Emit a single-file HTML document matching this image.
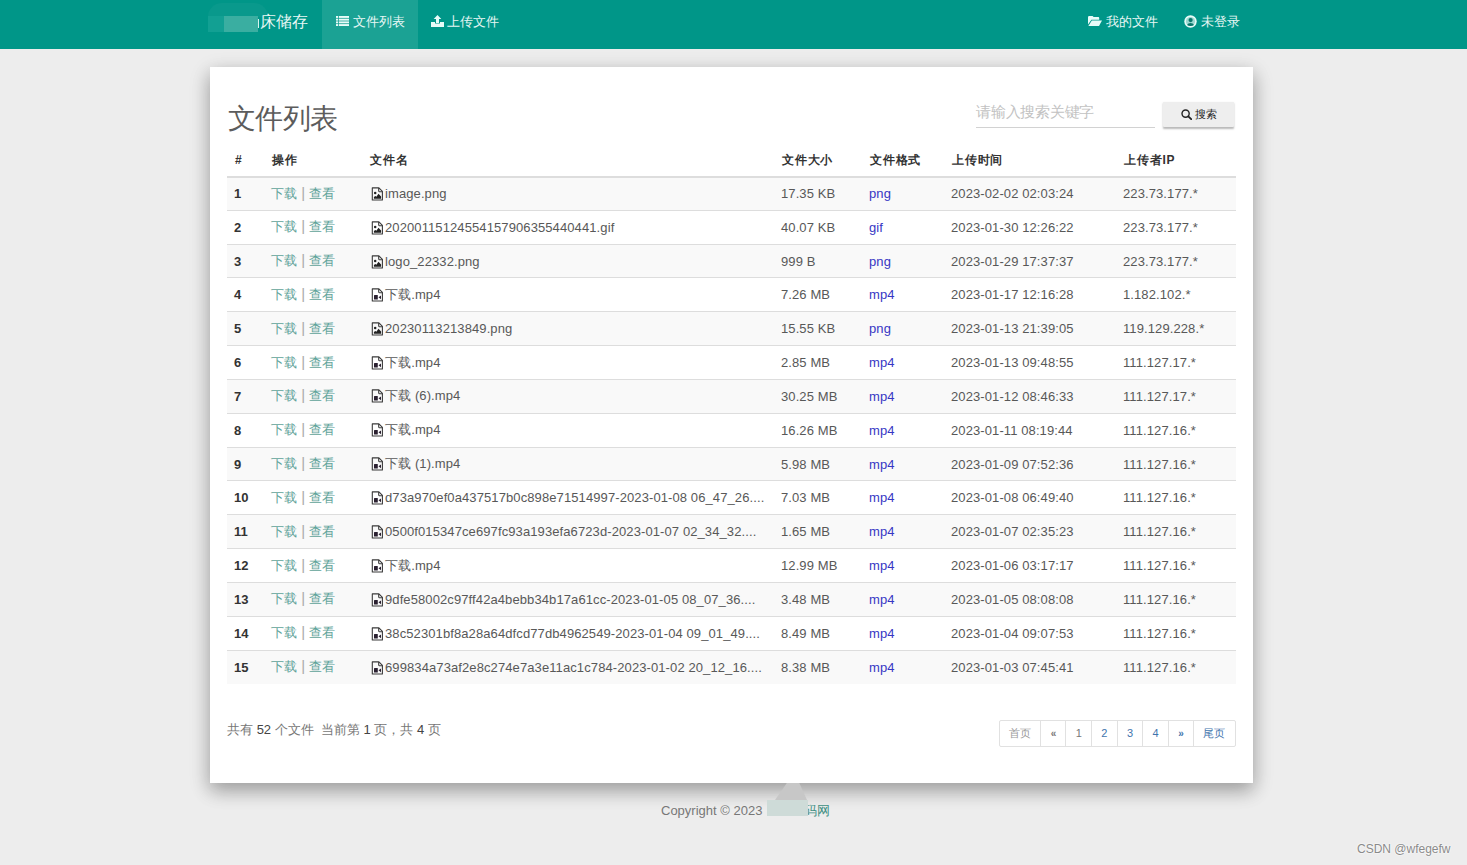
<!DOCTYPE html>
<html><head><meta charset="utf-8"><title>文件列表</title>
<style>
*{box-sizing:border-box;margin:0;padding:0}
html,body{width:1467px;height:865px;overflow:hidden}
body{background:#ededed;font-family:"Liberation Sans",sans-serif;font-size:13px;color:#333;position:relative}
.abs{position:absolute}
.nav{position:absolute;left:0;top:0;width:1467px;height:48.5px;background:#009688;color:#e6f7f4}
.nav .t{position:absolute;top:1px;height:48px;line-height:42px;font-size:13px;white-space:nowrap}
.active{position:absolute;left:322px;top:0;width:96px;height:48.5px;background:#1ba294}
.brand{font-size:16px !important;top:0.5px !important}
.panel{position:absolute;left:210px;top:67px;width:1043px;height:716px;background:#fff;box-shadow:0 8px 17px rgba(0,0,0,.2),0 6px 20px rgba(0,0,0,.19)}
h2{position:absolute;left:228px;top:99px;font-size:28px;letter-spacing:-.6px;font-weight:300;color:#5c5c5c;line-height:40px;white-space:nowrap}
.search{position:absolute;left:976px;top:100px;width:179px;height:27.7px;border-bottom:1px solid #d2d2d2;color:#c2c2c2;font-size:15px;letter-spacing:-.25px;line-height:24px;white-space:nowrap}
.btn{position:absolute;left:1163px;top:101.5px;width:71px;height:25px;background:#eee;border-radius:1px;box-shadow:0 1.5px 2px rgba(0,0,0,.28);font-size:11px;font-weight:normal;color:#222;line-height:24px;white-space:nowrap}
table{position:absolute;left:227px;top:140.5px;width:1009px;border-collapse:collapse;table-layout:fixed}
th{text-align:left;font-weight:bold;color:#333;height:36px;padding:4px 0 0 8px;font-size:12px;letter-spacing:.8px;border-bottom:2px solid #ddd;vertical-align:middle;white-space:nowrap}
td{height:33.83px;padding:0 0 0 7px;border-top:1px solid #ddd;vertical-align:middle;white-space:nowrap;overflow:hidden;color:#585858;letter-spacing:.1px}
tbody tr:nth-child(odd) td{background:#f9f9f9}
tbody tr:first-child td{border-top:0}
td.n{font-weight:bold;color:#333}
a{text-decoration:none}
.op a{color:#5fa399}
.op span{color:#aaa;margin:0 4px;font-size:15px;line-height:13px;vertical-align:0}
.fmt{color:#3737c4}
.fi{display:inline-block;width:12px;height:14px;vertical-align:-3px;margin:0 2px 0 2px}
.summary{position:absolute;left:227px;top:721px;color:#777;font-size:13px;white-space:nowrap;line-height:17px}
.summary b{font-weight:normal;color:#444}
.pg{position:absolute;left:999px;top:720px;height:26.5px;display:flex;border:1px solid #e1e1e1;border-radius:2px;font-size:11px;background:#fff}
.pg div{height:100%;border-left:1px solid #e1e1e1;text-align:center;line-height:24.5px;color:#3f74ad}
.pg div:first-child{border-left:0}
.copy{position:absolute;left:661px;top:802.8px;color:#777;font-size:13px;white-space:nowrap;line-height:16px}
.csdn{position:absolute;left:1357px;top:842.3px;color:#8a8a8a;text-shadow:0 0 2px #fff,0 0 2px #fff;font-size:12px;white-space:nowrap;line-height:14px}
</style></head>
<body>
<div class="nav">
  <div class="active"></div>
  <div class="abs" style="left:208px;top:3px;width:60px;height:14px;border-radius:30px 30px 0 0;background:rgba(255,255,255,.035)"></div>
  <div class="t brand" style="left:260px">床储存</div>
  <div class="abs" style="left:250px;top:26.5px;width:9px;height:1.2px;background:#d8f3ef"></div>
  <div class="abs" style="left:257.5px;top:19px;width:1.2px;height:8.7px;background:#d8f3ef"></div>
  <div class="abs" style="left:208px;top:16px;width:16px;height:16px;background:#12a093"></div>
  <div class="abs" style="left:224px;top:16px;width:34px;height:16px;background:#3aaea1"></div>
  <svg class="abs" style="left:336px;top:16px" width="13" height="10" viewBox="0 0 13 10"><g fill="#e8fbf8"><rect x="0" y="0" width="2.2" height="1.9"/><rect x="3" y="0" width="10" height="1.9"/><rect x="0" y="2.7" width="2.2" height="1.9"/><rect x="3" y="2.7" width="10" height="1.9"/><rect x="0" y="5.4" width="2.2" height="1.9"/><rect x="3" y="5.4" width="10" height="1.9"/><rect x="0" y="8.1" width="2.2" height="1.9"/><rect x="3" y="8.1" width="10" height="1.9"/></g></svg>
  <div class="t" style="left:353px">文件列表</div>
  <svg class="abs" style="left:431px;top:15px" width="13" height="12" viewBox="0 0 13 12"><g fill="#e8fbf8"><path d="M6.5 0L10.3 4H8V8H5V4H2.7z"/><path d="M0 7H4V8.6H9V7H13V12H0z"/></g></svg>
  <div class="t" style="left:447px">上传文件</div>
  <svg class="abs" style="left:1088px;top:16px" width="14" height="10" viewBox="0 0 14 10"><g fill="#e8fbf8"><path d="M0 1.2Q0 0 1.2 0H4.6L5.6 1.1H10.4Q11.2 1.1 11.2 2V3.8H3.4L0 8.6z"/><path d="M3.8 4.6H14L11 10H0.4z"/></g></svg>
  <div class="t" style="left:1106px">我的文件</div>
  <svg class="abs" style="left:1184px;top:15px" width="13" height="13" viewBox="0 0 13 13"><circle cx="6.5" cy="6.5" r="6.2" fill="#e8fbf8"/><circle cx="6.5" cy="6.5" r="4.6" fill="#9bd8d0"/><circle cx="6.6" cy="5.1" r="2.1" fill="#08766b"/><path d="M3 10Q4 7.9 6.5 7.9Q9 7.9 10 10Q8.5 11 6.5 11Q4.5 11 3 10Z" fill="#08766b"/></svg>
  <div class="t" style="left:1201px">未登录</div>
</div>
<div class="panel"></div>
<h2>文件列表</h2>
<div class="search">请输入搜索关键字</div>
<div class="btn"><svg class="abs" style="left:18px;top:7px" width="11" height="11" viewBox="0 0 11 11"><circle cx="4.6" cy="4.6" r="3.6" fill="none" stroke="#222" stroke-width="1.4"/><path d="M7.3 7.3L10.2 10.2" stroke="#222" stroke-width="1.8" stroke-linecap="round"/></svg><span class="abs" style="left:31.5px;top:0">搜索</span></div>
<table>
<colgroup><col style="width:37px"><col style="width:98px"><col style="width:412px"><col style="width:88px"><col style="width:82px"><col style="width:172px"><col style="width:120px"></colgroup>
<thead><tr><th>#</th><th>操作</th><th>文件名</th><th>文件大小</th><th>文件格式</th><th>上传时间</th><th>上传者IP</th></tr></thead>
<tbody id="tb">
<tr><td class="n">1</td><td class="op"><a>下载</a><span>|</span><a>查看</a></td><td><svg class="fi" viewBox="0 0 12 14"><path d="M1.3 .9H7.9L11.4 4.4V13H1.3Z" fill="none" stroke="#3a3a3a" stroke-width="1.1" stroke-linejoin="round"/><path d="M7.7 .9V4.1Q7.7 4.7 8.3 4.7H11.4" fill="none" stroke="#3a3a3a" stroke-width="1.1"/><circle cx="4.2" cy="6" r="1.25" fill="#222"/><path d="M2.9 11.8V10L4.4 8.9L5.4 9.7L7.5 6.8L10.1 9.5V11.8Z" fill="#222"/></svg>image.png</td><td>17.35 KB</td><td class="fmt">png</td><td>2023-02-02 02:03:24</td><td>223.73.177.*</td></tr>
<tr><td class="n">2</td><td class="op"><a>下载</a><span>|</span><a>查看</a></td><td><svg class="fi" viewBox="0 0 12 14"><path d="M1.3 .9H7.9L11.4 4.4V13H1.3Z" fill="none" stroke="#3a3a3a" stroke-width="1.1" stroke-linejoin="round"/><path d="M7.7 .9V4.1Q7.7 4.7 8.3 4.7H11.4" fill="none" stroke="#3a3a3a" stroke-width="1.1"/><circle cx="4.2" cy="6" r="1.25" fill="#222"/><path d="M2.9 11.8V10L4.4 8.9L5.4 9.7L7.5 6.8L10.1 9.5V11.8Z" fill="#222"/></svg>20200115124554157906355440441.gif</td><td>40.07 KB</td><td class="fmt">gif</td><td>2023-01-30 12:26:22</td><td>223.73.177.*</td></tr>
<tr><td class="n">3</td><td class="op"><a>下载</a><span>|</span><a>查看</a></td><td><svg class="fi" viewBox="0 0 12 14"><path d="M1.3 .9H7.9L11.4 4.4V13H1.3Z" fill="none" stroke="#3a3a3a" stroke-width="1.1" stroke-linejoin="round"/><path d="M7.7 .9V4.1Q7.7 4.7 8.3 4.7H11.4" fill="none" stroke="#3a3a3a" stroke-width="1.1"/><circle cx="4.2" cy="6" r="1.25" fill="#222"/><path d="M2.9 11.8V10L4.4 8.9L5.4 9.7L7.5 6.8L10.1 9.5V11.8Z" fill="#222"/></svg>logo_22332.png</td><td>999 B</td><td class="fmt">png</td><td>2023-01-29 17:37:37</td><td>223.73.177.*</td></tr>
<tr><td class="n">4</td><td class="op"><a>下载</a><span>|</span><a>查看</a></td><td><svg class="fi" viewBox="0 0 12 14"><path d="M1.3 .9H7.9L11.4 4.4V13H1.3Z" fill="none" stroke="#3a3a3a" stroke-width="1.1" stroke-linejoin="round"/><path d="M7.7 .9V4.1Q7.7 4.7 8.3 4.7H11.4" fill="none" stroke="#3a3a3a" stroke-width="1.1"/><rect x="3" y="7.1" width="3.8" height="4.3" rx=".5" fill="#2a2030"/><path d="M7.5 9.3L10 7.4V11.2Z" fill="#2a2030"/></svg>下载.mp4</td><td>7.26 MB</td><td class="fmt">mp4</td><td>2023-01-17 12:16:28</td><td>1.182.102.*</td></tr>
<tr><td class="n">5</td><td class="op"><a>下载</a><span>|</span><a>查看</a></td><td><svg class="fi" viewBox="0 0 12 14"><path d="M1.3 .9H7.9L11.4 4.4V13H1.3Z" fill="none" stroke="#3a3a3a" stroke-width="1.1" stroke-linejoin="round"/><path d="M7.7 .9V4.1Q7.7 4.7 8.3 4.7H11.4" fill="none" stroke="#3a3a3a" stroke-width="1.1"/><circle cx="4.2" cy="6" r="1.25" fill="#222"/><path d="M2.9 11.8V10L4.4 8.9L5.4 9.7L7.5 6.8L10.1 9.5V11.8Z" fill="#222"/></svg>20230113213849.png</td><td>15.55 KB</td><td class="fmt">png</td><td>2023-01-13 21:39:05</td><td>119.129.228.*</td></tr>
<tr><td class="n">6</td><td class="op"><a>下载</a><span>|</span><a>查看</a></td><td><svg class="fi" viewBox="0 0 12 14"><path d="M1.3 .9H7.9L11.4 4.4V13H1.3Z" fill="none" stroke="#3a3a3a" stroke-width="1.1" stroke-linejoin="round"/><path d="M7.7 .9V4.1Q7.7 4.7 8.3 4.7H11.4" fill="none" stroke="#3a3a3a" stroke-width="1.1"/><rect x="3" y="7.1" width="3.8" height="4.3" rx=".5" fill="#2a2030"/><path d="M7.5 9.3L10 7.4V11.2Z" fill="#2a2030"/></svg>下载.mp4</td><td>2.85 MB</td><td class="fmt">mp4</td><td>2023-01-13 09:48:55</td><td>111.127.17.*</td></tr>
<tr><td class="n">7</td><td class="op"><a>下载</a><span>|</span><a>查看</a></td><td><svg class="fi" viewBox="0 0 12 14"><path d="M1.3 .9H7.9L11.4 4.4V13H1.3Z" fill="none" stroke="#3a3a3a" stroke-width="1.1" stroke-linejoin="round"/><path d="M7.7 .9V4.1Q7.7 4.7 8.3 4.7H11.4" fill="none" stroke="#3a3a3a" stroke-width="1.1"/><rect x="3" y="7.1" width="3.8" height="4.3" rx=".5" fill="#2a2030"/><path d="M7.5 9.3L10 7.4V11.2Z" fill="#2a2030"/></svg>下载 (6).mp4</td><td>30.25 MB</td><td class="fmt">mp4</td><td>2023-01-12 08:46:33</td><td>111.127.17.*</td></tr>
<tr><td class="n">8</td><td class="op"><a>下载</a><span>|</span><a>查看</a></td><td><svg class="fi" viewBox="0 0 12 14"><path d="M1.3 .9H7.9L11.4 4.4V13H1.3Z" fill="none" stroke="#3a3a3a" stroke-width="1.1" stroke-linejoin="round"/><path d="M7.7 .9V4.1Q7.7 4.7 8.3 4.7H11.4" fill="none" stroke="#3a3a3a" stroke-width="1.1"/><rect x="3" y="7.1" width="3.8" height="4.3" rx=".5" fill="#2a2030"/><path d="M7.5 9.3L10 7.4V11.2Z" fill="#2a2030"/></svg>下载.mp4</td><td>16.26 MB</td><td class="fmt">mp4</td><td>2023-01-11 08:19:44</td><td>111.127.16.*</td></tr>
<tr><td class="n">9</td><td class="op"><a>下载</a><span>|</span><a>查看</a></td><td><svg class="fi" viewBox="0 0 12 14"><path d="M1.3 .9H7.9L11.4 4.4V13H1.3Z" fill="none" stroke="#3a3a3a" stroke-width="1.1" stroke-linejoin="round"/><path d="M7.7 .9V4.1Q7.7 4.7 8.3 4.7H11.4" fill="none" stroke="#3a3a3a" stroke-width="1.1"/><rect x="3" y="7.1" width="3.8" height="4.3" rx=".5" fill="#2a2030"/><path d="M7.5 9.3L10 7.4V11.2Z" fill="#2a2030"/></svg>下载 (1).mp4</td><td>5.98 MB</td><td class="fmt">mp4</td><td>2023-01-09 07:52:36</td><td>111.127.16.*</td></tr>
<tr><td class="n">10</td><td class="op"><a>下载</a><span>|</span><a>查看</a></td><td><svg class="fi" viewBox="0 0 12 14"><path d="M1.3 .9H7.9L11.4 4.4V13H1.3Z" fill="none" stroke="#3a3a3a" stroke-width="1.1" stroke-linejoin="round"/><path d="M7.7 .9V4.1Q7.7 4.7 8.3 4.7H11.4" fill="none" stroke="#3a3a3a" stroke-width="1.1"/><rect x="3" y="7.1" width="3.8" height="4.3" rx=".5" fill="#2a2030"/><path d="M7.5 9.3L10 7.4V11.2Z" fill="#2a2030"/></svg>d73a970ef0a437517b0c898e71514997-2023-01-08 06_47_26....</td><td>7.03 MB</td><td class="fmt">mp4</td><td>2023-01-08 06:49:40</td><td>111.127.16.*</td></tr>
<tr><td class="n">11</td><td class="op"><a>下载</a><span>|</span><a>查看</a></td><td><svg class="fi" viewBox="0 0 12 14"><path d="M1.3 .9H7.9L11.4 4.4V13H1.3Z" fill="none" stroke="#3a3a3a" stroke-width="1.1" stroke-linejoin="round"/><path d="M7.7 .9V4.1Q7.7 4.7 8.3 4.7H11.4" fill="none" stroke="#3a3a3a" stroke-width="1.1"/><rect x="3" y="7.1" width="3.8" height="4.3" rx=".5" fill="#2a2030"/><path d="M7.5 9.3L10 7.4V11.2Z" fill="#2a2030"/></svg>0500f015347ce697fc93a193efa6723d-2023-01-07 02_34_32....</td><td>1.65 MB</td><td class="fmt">mp4</td><td>2023-01-07 02:35:23</td><td>111.127.16.*</td></tr>
<tr><td class="n">12</td><td class="op"><a>下载</a><span>|</span><a>查看</a></td><td><svg class="fi" viewBox="0 0 12 14"><path d="M1.3 .9H7.9L11.4 4.4V13H1.3Z" fill="none" stroke="#3a3a3a" stroke-width="1.1" stroke-linejoin="round"/><path d="M7.7 .9V4.1Q7.7 4.7 8.3 4.7H11.4" fill="none" stroke="#3a3a3a" stroke-width="1.1"/><rect x="3" y="7.1" width="3.8" height="4.3" rx=".5" fill="#2a2030"/><path d="M7.5 9.3L10 7.4V11.2Z" fill="#2a2030"/></svg>下载.mp4</td><td>12.99 MB</td><td class="fmt">mp4</td><td>2023-01-06 03:17:17</td><td>111.127.16.*</td></tr>
<tr><td class="n">13</td><td class="op"><a>下载</a><span>|</span><a>查看</a></td><td><svg class="fi" viewBox="0 0 12 14"><path d="M1.3 .9H7.9L11.4 4.4V13H1.3Z" fill="none" stroke="#3a3a3a" stroke-width="1.1" stroke-linejoin="round"/><path d="M7.7 .9V4.1Q7.7 4.7 8.3 4.7H11.4" fill="none" stroke="#3a3a3a" stroke-width="1.1"/><rect x="3" y="7.1" width="3.8" height="4.3" rx=".5" fill="#2a2030"/><path d="M7.5 9.3L10 7.4V11.2Z" fill="#2a2030"/></svg>9dfe58002c97ff42a4bebb34b17a61cc-2023-01-05 08_07_36....</td><td>3.48 MB</td><td class="fmt">mp4</td><td>2023-01-05 08:08:08</td><td>111.127.16.*</td></tr>
<tr><td class="n">14</td><td class="op"><a>下载</a><span>|</span><a>查看</a></td><td><svg class="fi" viewBox="0 0 12 14"><path d="M1.3 .9H7.9L11.4 4.4V13H1.3Z" fill="none" stroke="#3a3a3a" stroke-width="1.1" stroke-linejoin="round"/><path d="M7.7 .9V4.1Q7.7 4.7 8.3 4.7H11.4" fill="none" stroke="#3a3a3a" stroke-width="1.1"/><rect x="3" y="7.1" width="3.8" height="4.3" rx=".5" fill="#2a2030"/><path d="M7.5 9.3L10 7.4V11.2Z" fill="#2a2030"/></svg>38c52301bf8a28a64dfcd77db4962549-2023-01-04 09_01_49....</td><td>8.49 MB</td><td class="fmt">mp4</td><td>2023-01-04 09:07:53</td><td>111.127.16.*</td></tr>
<tr><td class="n">15</td><td class="op"><a>下载</a><span>|</span><a>查看</a></td><td><svg class="fi" viewBox="0 0 12 14"><path d="M1.3 .9H7.9L11.4 4.4V13H1.3Z" fill="none" stroke="#3a3a3a" stroke-width="1.1" stroke-linejoin="round"/><path d="M7.7 .9V4.1Q7.7 4.7 8.3 4.7H11.4" fill="none" stroke="#3a3a3a" stroke-width="1.1"/><rect x="3" y="7.1" width="3.8" height="4.3" rx=".5" fill="#2a2030"/><path d="M7.5 9.3L10 7.4V11.2Z" fill="#2a2030"/></svg>699834a73af2e8c274e7a3e11ac1c784-2023-01-02 20_12_16....</td><td>8.38 MB</td><td class="fmt">mp4</td><td>2023-01-03 07:45:41</td><td>111.127.16.*</td></tr>
</tbody>
</table>
<div class="summary">共有 <b>52</b> 个文件&nbsp; 当前第 <b>1</b> 页，共 <b>4</b> 页</div>
<div class="pg">
  <div style="width:40.4px;color:#999">首页</div>
  <div style="width:25.1px;color:#777;font-weight:bold;font-size:10px;padding-top:1px">«</div>
  <div style="width:25.7px;color:#777">1</div>
  <div style="width:25.5px">2</div>
  <div style="width:25.6px">3</div>
  <div style="width:25.7px">4</div>
  <div style="width:25.1px;font-weight:bold;font-size:10px;padding-top:1px">»</div>
  <div style="width:41.5px">尾页</div>
</div>
<div class="copy">Copyright © 2023 <span style="display:inline-block;width:38px"></span><span style="color:#3f8f83">码网</span></div>
<div class="abs" style="left:775px;top:783px;width:32px;height:17px;background:#c7c7c7;clip-path:polygon(37% 0,76% 0,100% 100%,0 100%)"></div>
<div class="abs" style="left:766.5px;top:800px;width:41.5px;height:15.5px;background:#cedbd8"></div>
<div class="csdn">CSDN @wfegefw</div>
</body></html>
